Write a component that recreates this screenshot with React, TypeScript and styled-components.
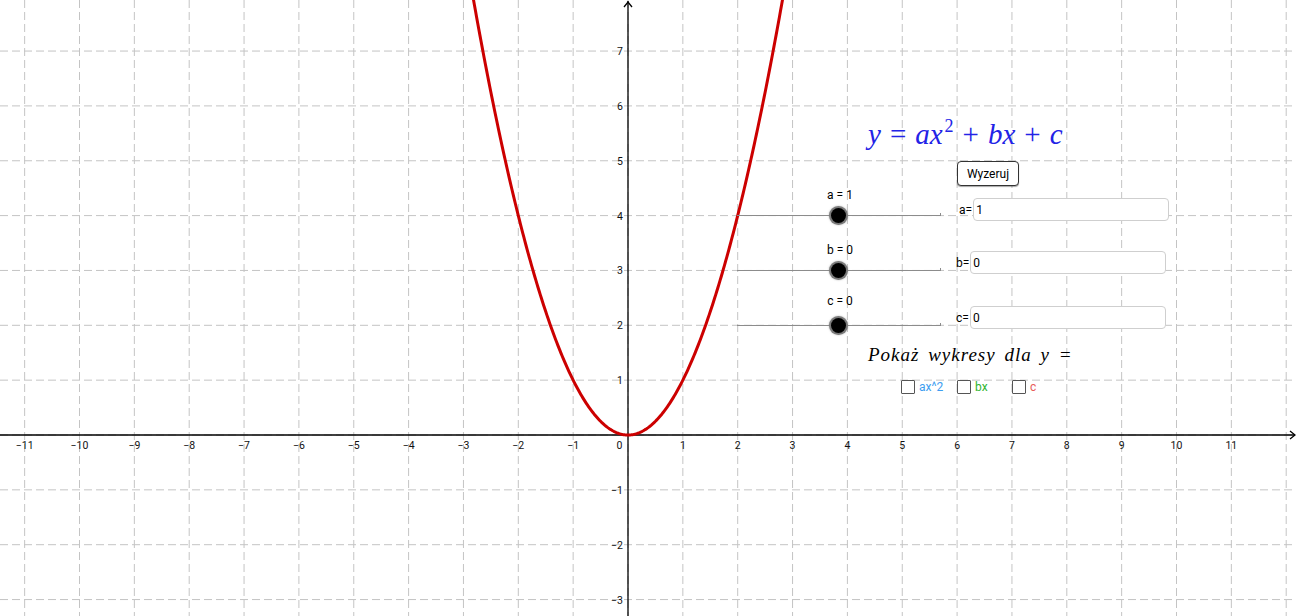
import React from 'react'
import styled, { createGlobalStyle } from 'styled-components'

const W = 1296
const H = 616
const OX = 628
const OY = 435
const U = 54.85

const GlobalStyle = createGlobalStyle`
  html, body {
    margin: 0;
    padding: 0;
    background: #fff;
  }
  body {
    font-family: Roboto, "Liberation Sans", sans-serif;
    overflow: hidden;
  }
`

const Applet = styled.div`
  position: relative;
  width: ${W}px;
  height: ${H}px;
  overflow: hidden;
  background: #fff;
`

const Graph = styled.svg`
  display: block;
  font-family: Roboto, "Liberation Sans", sans-serif;
`

// the GeoGebra objects sit on the graphics view, over the grid
const Panel = styled.div`
  position: absolute;
  left: 737px;
  top: 114px;
  display: flex;
  flex-direction: column;
  align-items: flex-start;
`

const Formula = styled.div`
  margin-left: 131px;
  height: 40px;
  line-height: 40px;
  color: #2323e6;
  font-family: "Liberation Serif", "DejaVu Serif", serif;
  font-style: italic;
  font-size: 29px;
  white-space: nowrap;

  sup {
    font-size: 18px;
    vertical-align: 12px;
    line-height: 0;
    font-style: normal;
    margin-left: 2px;
  }
`

const Op = styled.span`
  font-style: normal;
  margin: 0 9px;
`

const ResetButton = styled.button`
  margin: 7px 0 0 220px;
  width: 62px;
  height: 25px;
  padding: 0;
  background: #fff;
  border: 1px solid #333;
  border-radius: 4px;
  box-shadow: 0 1px 1px rgba(0, 0, 0, 0.35);
  font-family: Roboto, "Liberation Sans", sans-serif;
  font-size: 12px;
  color: #000;
`

const SliderRow = styled.div<{ $top: number }>`
  display: flex;
  align-items: flex-end;
  margin-top: ${(p) => p.$top}px;
`

const SliderColumn = styled.div<{ $gap: number }>`
  display: flex;
  flex-direction: column;
  gap: ${(p) => p.$gap}px;
  width: 204px;
`

const SliderLabel = styled.div`
  width: 206px;
  line-height: 14px;
  text-align: center;
  font-size: 12px;
  color: #000;
`

const Track = styled.div`
  position: relative;
  height: 15px;
  display: flex;
  align-items: center;

  &::before {
    content: '';
    flex: 1;
    height: 1px;
    background: #8c8c8c;
  }

  &::after {
    content: '';
    position: absolute;
    right: 0;
    top: 5px;
    width: 1px;
    height: 3px;
    background: #8c8c8c;
  }
`

const Knob = styled.div`
  position: absolute;
  left: 94px;
  top: 0;
  width: 15px;
  height: 15px;
  border-radius: 50%;
  background: #000;
  box-shadow: 0 0 0 2px #7a7a7a, 0 0 2px 2px rgba(120, 120, 120, 0.6);
`

const InputRow = styled.div<{ $left: number; $bottom: number }>`
  display: flex;
  align-items: center;
  gap: 1px;
  margin-left: ${(p) => p.$left}px;
  margin-bottom: ${(p) => p.$bottom}px;
  font-size: 12px;
  color: #000;
`

const Field = styled.div`
  width: 192px;
  height: 21px;
  border: 1px solid #cfcfcf;
  border-radius: 4px;
  background: #fff;
  display: flex;
  align-items: center;
  padding-left: 2px;
  font-size: 12px;
`

const ShowText = styled.div`
  margin: 10px 0 0 131px;
  line-height: 24px;
  font-family: "Liberation Serif", "DejaVu Serif", serif;
  font-style: italic;
  font-size: 19px;
  letter-spacing: 1px;
  word-spacing: 3px;
  color: #000;
  white-space: nowrap;
`

const Checks = styled.div`
  display: flex;
  align-items: center;
  margin: 13px 0 0 164px;
`

const CheckItem = styled.label<{ $width: number; $color: string }>`
  display: flex;
  align-items: center;
  gap: 4px;
  width: ${(p) => p.$width}px;
  font-size: 12px;
  color: ${(p) => p.$color};
`

const Box = styled.span`
  display: inline-block;
  width: 12px;
  height: 12px;
  border: 1.5px solid #555;
  border-radius: 1px;
  background: #fff;
`

const sliders = [
  { name: 'a', value: 1, top: 2, gap: 6, left: 18, bottom: 2 },
  { name: 'b', value: 0, top: 20, gap: 6, left: 15, bottom: 4 },
  { name: 'c', value: 0, top: 16, gap: 10, left: 15, bottom: 4 },
]

const checks = [
  { text: 'ax^2', color: '#3d9df0', width: 56 },
  { text: 'bx', color: '#2fb52f', width: 55 },
  { text: 'c', color: '#e85a5a', width: 30 },
]

function range(a: number, b: number) {
  const out: number[] = []
  for (let i = a; i <= b; i++) out.push(i)
  return out
}

function parabola() {
  const pts: string[] = []
  for (let x = -2.9; x <= 2.9001; x += 0.02) {
    const px = OX + x * U
    const py = OY - x * x * U
    pts.push(`${px.toFixed(2)},${py.toFixed(2)}`)
  }
  return pts.join(' ')
}

const minus = (n: number) => (n < 0 ? `\u2212${-n}` : `${n}`)

export default function App() {
  return (
    <>
      <GlobalStyle />
      <Applet>
        <Graph width={W} height={H} viewBox={`0 0 ${W} ${H}`}>
          <g stroke="#c4c4c4" strokeWidth={1} strokeDasharray="8 4">
            {range(-11, 12).map((k) => (
              <line key={'v' + k} x1={OX + k * U} y1={0} x2={OX + k * U} y2={H} />
            ))}
            {range(-3, 7).map((k) => (
              <line key={'h' + k} x1={0} y1={OY - k * U} x2={W} y2={OY - k * U} />
            ))}
          </g>

          <g stroke="#000" strokeWidth={1.3} fill="none">
            <line x1={0} y1={OY} x2={W - 1} y2={OY} />
            <line x1={OX} y1={1} x2={OX} y2={H} />
            <polyline points={`${W - 6},${OY - 4} ${W - 1},${OY} ${W - 6},${OY + 4}`} />
            <polyline points={`${OX - 4},${7} ${OX},${2} ${OX + 4},${7}`} />
          </g>

          <g fontSize={10.5} fill="#111">
            {range(-11, 11)
              .filter((k) => k !== 0)
              .map((k) => (
                <text key={'xl' + k} x={OX + k * U} y={449} textAnchor="middle">
                  {minus(k)}
                </text>
              ))}
            <text x={619.5} y={449} textAnchor="middle">0</text>
            {range(-3, 7)
              .filter((k) => k !== 0)
              .map((k) => (
                <text key={'yl' + k} x={623} y={OY - k * U + 4} textAnchor="end">
                  {minus(k)}
                </text>
              ))}
          </g>

          <polyline
            points={parabola()}
            fill="none"
            stroke="#cc0000"
            strokeWidth={3}
            strokeLinejoin="round"
          />
        </Graph>

        <Panel>
          <Formula>
            y<Op>=</Op>ax<sup>2</sup>
            <Op>+</Op>bx<Op>+</Op>c
          </Formula>

          <ResetButton>Wyzeruj</ResetButton>

          {sliders.map((s) => (
            <SliderRow key={s.name} $top={s.top}>
              <SliderColumn $gap={s.gap}>
                <SliderLabel>
                  {s.name} = {s.value}
                </SliderLabel>
                <Track>
                  <Knob />
                </Track>
              </SliderColumn>
              <InputRow $left={s.left} $bottom={s.bottom}>
                <span>{s.name}=</span>
                <Field>{s.value}</Field>
              </InputRow>
            </SliderRow>
          ))}

          <ShowText>Pokaż wykresy dla y =</ShowText>

          <Checks>
            {checks.map((c) => (
              <CheckItem key={c.text} $width={c.width} $color={c.color}>
                <Box />
                {c.text}
              </CheckItem>
            ))}
          </Checks>
        </Panel>
      </Applet>
    </>
  )
}
